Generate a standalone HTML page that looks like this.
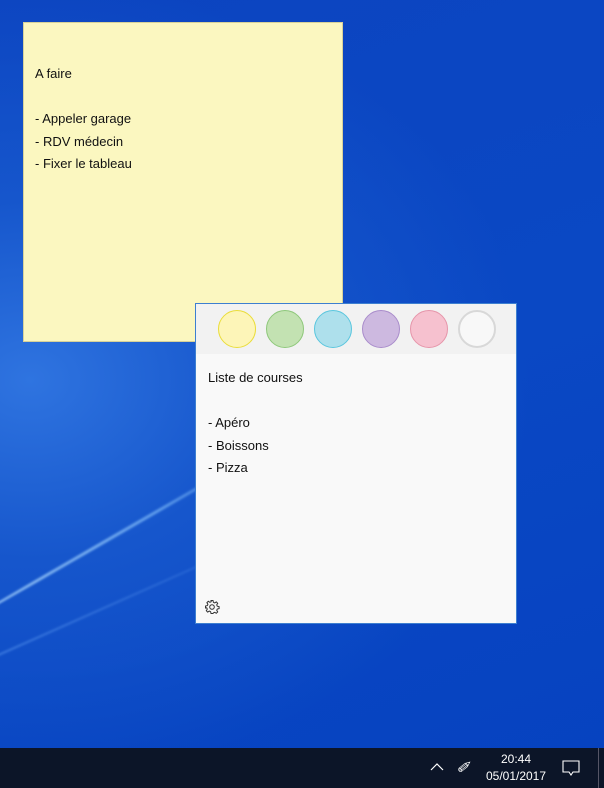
<!DOCTYPE html>
<html><head><style>
*{margin:0;padding:0;box-sizing:border-box}
body{width:604px;height:788px;overflow:hidden;position:relative;font-family:"Segoe UI","Liberation Sans",sans-serif;
background:radial-gradient(ellipse 500px 400px at 30px 380px,#2f74e0 0%,#1656cc 45%,transparent 100%),linear-gradient(160deg,#0c44c0 0%,#0a48c4 50%,#0642c0 100%);}
.streak{position:absolute;left:-60px;top:635px;width:420px;height:3px;border-radius:50%;background:linear-gradient(90deg,rgba(180,220,255,.9),rgba(140,200,255,.6) 60%,rgba(120,180,255,0));transform:rotate(-30deg);transform-origin:0 0;filter:blur(1px)}
.streak2{position:absolute;left:-40px;top:671px;width:280px;height:2px;background:linear-gradient(90deg,rgba(120,180,255,.45),rgba(120,180,255,.15));transform:rotate(-24deg);transform-origin:0 0;filter:blur(1px)}
.note{position:absolute;font-size:13px;color:#111;line-height:22.5px}
.y{left:23px;top:22px;width:320px;height:320px;background:#fbf7c0;border:1px solid #d6d19a;padding:40px 11px}
.w{left:195px;top:303px;width:322px;height:321px;background:#f9f9f9;border:1px solid #3d7fd0}
.hdr{height:50px;background:#f2f2f2;position:relative}
.c{position:absolute;top:6px;width:38px;height:38px;border-radius:50%;border:1px solid}
.tb{position:absolute;left:0;top:748px;width:604px;height:40px;background:#0c1528;color:#fff;font-size:12px}
</style></head><body>
<div class="streak"></div><div class="streak2"></div>
<div class="note y">A faire<br><br>- Appeler garage<br>- RDV médecin<br>- Fixer le tableau</div>
<div class="note w">
<div class="hdr">
<div class="c" style="left:22px;background:#fdf5b8;border-color:#eadd3a"></div>
<div class="c" style="left:70px;background:#c3e2b2;border-color:#8ec87a"></div>
<div class="c" style="left:118px;background:#aee0ec;border-color:#5ac6de"></div>
<div class="c" style="left:166px;background:#cdb9e0;border-color:#a98ccb"></div>
<div class="c" style="left:214px;background:#f6c1cf;border-color:#e695aa"></div>
<div class="c" style="left:262px;background:#f8f8f8;border:2px solid #d8d8d8"></div>
</div>
<div style="padding:13px 12px">Liste de courses<br><br>- Apéro<br>- Boissons<br>- Pizza</div>
<svg style="position:absolute;left:8px;top:295px" width="16" height="16" viewBox="0 0 16 16" fill="none" stroke="#333" stroke-width="1"><circle cx="8" cy="8" r="2.3"/><path d="M7 1.5h2l.4 1.8 1.3.6 1.6-1 1.4 1.4-1 1.6.6 1.3 1.8.4v2l-1.8.4-.6 1.3 1 1.6-1.4 1.4-1.6-1-1.3.6L9 14.5H7l-.4-1.8-1.3-.6-1.6 1-1.4-1.4 1-1.6-.6-1.3L1.5 9V7l1.8-.4.6-1.3-1-1.6 1.4-1.4 1.6 1 1.3-.6z"/></svg>
</div>
<div class="tb">
<svg style="position:absolute;left:430px;top:14px" width="14" height="10" viewBox="0 0 14 10" fill="none" stroke="#fff" stroke-width="1.2"><path d="M1 8l6-6 6 6"/></svg>
<span style="position:absolute;left:456px;top:10px;font-size:16px;font-style:italic">✐</span>
<div style="position:absolute;left:482px;top:3px;width:68px;text-align:center;line-height:17px">20:44<br>05/01/2017</div>
<svg style="position:absolute;left:562px;top:12px" width="18" height="17" viewBox="0 0 18 17" fill="none" stroke="#fff" stroke-width="1.1"><path d="M1 1h16v11h-6l-2 3-2-3H1z"/></svg>
<div style="position:absolute;left:598px;top:0;width:1px;height:40px;background:#556"></div>
</div>
</body></html>
